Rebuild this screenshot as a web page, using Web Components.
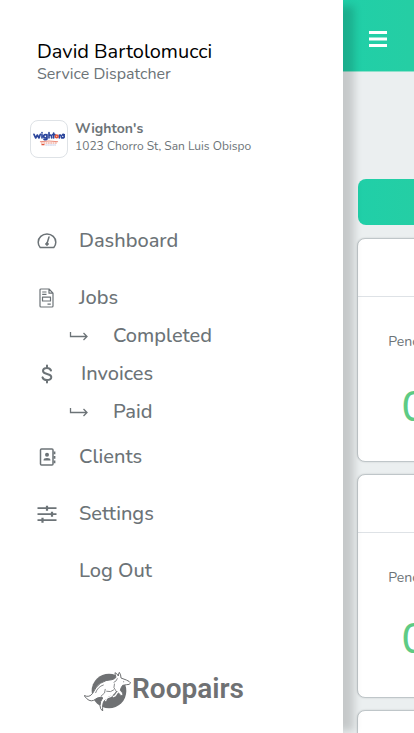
<!DOCTYPE html>
<html lang="en">
<head>
<meta charset="utf-8">
<meta name="viewport" content="width=device-width, initial-scale=1">
<title>Roopairs</title>
<style>
  html, body { margin: 0; height: 100%; }
  body { font-family: Nunito, "Open Sans", sans-serif; color: #6c7377; background: #fff; }
</style>
</head>
<body>
<app-shell>
  <side-drawer slot="drawer">
    <user-summary slot="head" name="David Bartolomucci" role-name="Service Dispatcher"></user-summary>
    <company-badge slot="head" name="Wighton's" address="1023 Chorro St, San Luis Obispo"></company-badge>
    <nav-item icon="gauge" label="Dashboard"></nav-item>
    <nav-item icon="doc" label="Jobs"><nav-item sub icon="arrow" label="Completed"></nav-item></nav-item>
    <nav-item follows icon="dollar" label="Invoices"><nav-item sub icon="arrow" label="Paid"></nav-item></nav-item>
    <nav-item near icon="book" label="Clients"></nav-item>
    <nav-item icon="sliders" label="Settings"></nav-item>
    <nav-item label="Log Out"></nav-item>
    <brand-logo slot="foot"></brand-logo>
  </side-drawer>
  <dashboard-page>
    <stat-card label="Pending" value="0"></stat-card>
    <stat-card compact label="Pending" value="0"></stat-card>
    <stat-card></stat-card>
  </dashboard-page>
</app-shell>

<script>
const define = (name, render) => customElements.define(name, class extends HTMLElement {
  connectedCallback() {
    if (this.shadowRoot) return;
    const t = document.createElement('template');
    t.innerHTML = render(this);
    this.attachShadow({ mode: 'open' }).append(t.content.cloneNode(true));
  }
});

const ICONS = {
  gauge: `<svg viewBox="0 0 20 20" fill="none" stroke="currentColor" stroke-width="1.500" stroke-linejoin="round"><path d="M3.200 16.500C1.800 15 1.200 13.200 1.200 11.200a8.800 8.200 0 0 1 17.600 0c0 2-.7 3.800-2 5.300z"/><path d="M10 12.500 12 6" stroke-linecap="round"/><circle cx="10" cy="13" r="1.300" fill="currentColor" stroke-width="1"/></svg>`,
  doc: `<svg viewBox="0 0 20 20" fill="none" stroke="currentColor" stroke-width="1.200" stroke-linejoin="round"><path d="M4 1h8l4 4.200V18a1 1 0 0 1-1 1H4a1 1 0 0 1-1-1V2a1 1 0 0 1 1-1zM12 1v4.200h4M5.500 9.200h8v3.800h-8zM5.200 4h4.300M5.200 6.300h4.300M10.500 16.200h3.300"/></svg>`,
  arrow: `<svg viewBox="0 0 20 20" fill="none" stroke="currentColor" stroke-width="1.300"><path d="M1.500 6v4.500h16.500M14.500 7l3.500 3.500-3.500 3.500"/></svg>`,
  dollar: `<svg viewBox="0 0 20 20" fill="none" stroke="currentColor" stroke-width="2" stroke-linecap="round"><path d="M14 6.500C13.300 4.800 11.800 4 10 4 7.700 4 6 5.200 6 7c0 4 8.300 2 8.300 6 0 1.900-1.800 3.100-4.300 3.100-2.200 0-3.900-.9-4.500-2.700M10 1.500v2.300M10 16.200v2.300"/></svg>`,
  book: `<svg viewBox="0 0 20 20" fill="none" stroke="currentColor" stroke-width="1.500" stroke-linejoin="round"><rect x="3.500" y="2" width="12.500" height="16" rx="1"/><path d="M17.500 4.500v2.700M17.500 9v2.700M17.500 13.500v2.700" stroke-width="1.800"/><circle cx="10" cy="7.800" r="2" fill="currentColor" stroke="none"/><path d="M6.500 13.500c0-1.800 1.200-2.500 3.500-2.500s3.500.7 3.500 2.500z" fill="currentColor" stroke="none"/></svg>`,
  sliders: `<svg viewBox="0 0 20 20" fill="none" stroke="currentColor" stroke-width="1.800"><path d="M.5 4.200h19M.5 10.200h19M.5 16.200h19"/><path d="M10 1.700v5M15 7.700v5M5.500 13.700v5" stroke-width="2.200"/></svg>`
};

define('app-shell', () => `
  <style>
    :host { display: flex; height: 100vh; overflow: hidden; }
    .drawer { flex: 0 0 calc(100% - 71px); position: relative; z-index: 1; background: #fff; }
    .drawer::before { content: ""; position: absolute; inset: 0; z-index: -1; box-shadow: 15px 2px 8px -4px rgba(0, 0, 0, .16); }
    .drawer ::slotted(*) { height: 100%; background: #fff; }
    main { flex: 0 0 100%; }
  </style>
  <div class="drawer"><slot name="drawer"></slot></div>
  <main><slot></slot></main>`);

define('side-drawer', () => `
  <style>
    :host { display: flex; flex-direction: column; box-sizing: border-box; padding: 40px 30px 21px; }
    header { display: flex; flex-direction: column; gap: 36px; }
    nav { padding-top: 64px; }
    footer { margin-top: auto; padding-left: 54px; }
  </style>
  <header><slot name="head"></slot></header>
  <nav><slot></slot></nav>
  <footer><slot name="foot"></slot></footer>`);

define('user-summary', el => `
  <style>
    :host { display: block; padding-left: 7px; }
    h1 { margin: 0; font-weight: 400; font-size: 20px; line-height: 24px; color: #000; }
    p { margin: 0; font-size: 16px; line-height: 20px; }
  </style>
  <h1>${el.getAttribute('name')}</h1>
  <p>${el.getAttribute('role-name')}</p>`);

define('company-badge', el => `
  <style>
    :host { display: flex; gap: 7px; }
    .logo { display: grid; place-items: center; box-sizing: border-box; width: 38px; height: 38px; border: 1px solid #dee2e6; border-radius: 8px; }
    h2 { margin: 0; font-size: 14px; line-height: 18px; font-weight: 700; }
    p { margin: 0; font-size: 12px; line-height: 16px; }
    svg { display: block; width: 32px; height: 16px; }
  </style>
  <div class="logo">
    <svg viewBox="0 0 96 48" fill="none" stroke-linejoin="round" stroke-linecap="round" role="img" aria-label="Wighton's logo">
      <g stroke="#2b459c" stroke-width="5">
        <path d="M3 10l5 11 5-9 5 9 4-11M27 11v10M27 5v1M42 11v13q-5 4-9 1M42 16a5 5 0 1 0-10 0 5 5 0 0 0 10 0M48 5v16M48 14q8-6 8 7M62 6v15M59 11h7"/>
        <path d="M79 21V12M79 14q6-5 7 7M94 11q-5-2-5 1 5 2 5 5-1 5-6 3"/>
      </g>
      <g stroke="#e2553a"><circle cx="71" cy="16" r="4" stroke-width="5"/><path d="M22 32q26-4 52 0" stroke-width="2"/><path d="M25 36h46" stroke-width="2" stroke-dasharray="3 4"/><path d="M27 41h6" stroke-width="4"/></g>
      <path d="M38 42h30" stroke="#a9b1d6" stroke-width="2" stroke-dasharray="4 3"/>
    </svg>
  </div>
  <div><h2>${el.getAttribute('name')}</h2><p>${el.getAttribute('address')}</p></div>`);

define('nav-item', el => `
  <style>
    :host { display: block; margin-top: 19px; }
    :host(:first-of-type), :host([sub]), :host([follows]) { margin-top: 0; }
    :host([near]) { margin-top: 7px; }
    a { display: grid; grid-template-columns: 20px 1fr; column-gap: 22px; align-items: center; height: 38px; padding-left: 7px; color: inherit; text-decoration: none; font-size: 20px; line-height: 26px; font-weight: 500; }
    :host([sub]) a { padding-left: 39px; column-gap: 24px; }
    :host([follows]) > a { column-gap: 24px; }
    svg { display: block; width: 20px; height: 20px; }
  </style>
  <a href="#"><span>${ICONS[el.getAttribute('icon')] || ''}</span><span>${el.getAttribute('label')}</span></a>
  <slot></slot>`);

define('brand-logo', () => `
  <style>
    :host { display: flex; align-items: flex-start; color: #6f7173; font: 600 28px/34px Roboto, sans-serif; }
    svg { display: block; width: 48px; height: 40px; }
  </style>
  <svg viewBox="26 36 144 120" stroke-linejoin="round" stroke-linecap="round" aria-hidden="true">
    <circle cx="101" cy="93" r="52" fill="currentColor"/>
    <path fill="#fff" stroke="#6f7173" stroke-width="3" d="M28 107q14 7 24-7 9-20 23-30 17-11 35-11 8-2 12-7-3-8-3-14 6 2 10 10 0-6 3-11 5 7 5 17l16 6q10 4 13 9-4 6-12 5l-12 2q-5 6-7 15l7 8 1 8-6 0-13-14q-3 9-14 14-14 4-22 14-8 8-6 32-8-6-8-16 0-13 8-23l-3-3q-14 1-24 10-14 6-27-12z"/>
    <path fill="none" stroke="#6f7173" stroke-width="2.500" d="M61 98q6-18 23-23M78 108q14-8 12-20M117 72q-5 12 4 20M94 94q13 4 21-4M126 56q-2 8-10 11"/>
    <path fill="#6f7173" d="M143 64l5 2-5 1z"/>
    <path fill="none" stroke="#fff" stroke-width="4" d="M112 104q-5 8-15 9-5 2-6 9M130 94q-5 3-10 13l-6 3"/>
  </svg>
  <span>Roopairs</span>`);

define('dashboard-page', () => `
  <style>
    :host { display: block; min-height: 100%; background: #ebeff0; }
    header { box-sizing: border-box; height: 72px; padding: 19px 15px; background: linear-gradient(90deg, #20cfa8, #3fc98f); border-bottom: 1px solid #8fe0cb; }
    button { display: block; border: 0; cursor: pointer; }
    .menu { padding: 11px 10px; background: none; }
    .menu svg { display: block; width: 20px; height: 18px; }
    .content { display: flex; flex-direction: column; gap: 12px; padding: 107px 14px 0; }
    .action { height: 46px; margin: 0 0 1px 1px; border-radius: 8px; background: linear-gradient(90deg, #20cfa8, #3fc98f); }
  </style>
  <header><button class="menu" aria-label="Menu"><svg viewBox="0 0 20 18"><path fill="#fff" d="M1 1h18v3H1zM1 7.500h18v3H1zM1 14h18v3H1z"/></svg></button></header>
  <div class="content"><button class="action" aria-label="Action"></button><slot></slot></div>`);

define('stat-card', el => `
  <style>
    :host { display: block; box-sizing: border-box; height: 224px; border: 1px solid #bfc6c9; border-radius: 8px; background: #fff; box-shadow: 0 0 2px rgba(0, 0, 0, .15); }
    .top { height: 57px; border-bottom: 1px solid #dee2e6; }
    .stat { display: flex; flex-direction: column; align-items: center; gap: 31px; width: 112px; padding-top: 35px; }
    :host([compact]) .stat { gap: 27px; }
    .label { font-size: 14px; line-height: 20px; }
    .value { font-size: 42px; line-height: 50px; font-weight: 500; color: #5ecb84; }
  </style>
  <div class="top"></div>
  ${el.hasAttribute('label') ? `<div class="stat"><span class="label">${el.getAttribute('label')}</span><span class="value">${el.getAttribute('value')}</span></div>` : ''}`);
</script>
</body>
</html>
